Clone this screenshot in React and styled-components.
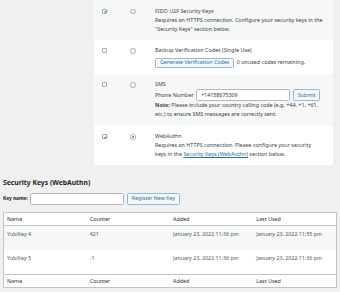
import React from "react";
import styled, { createGlobalStyle } from "styled-components";

const GlobalStyle = createGlobalStyle`
  html, body {
    margin: 0;
    padding: 0;
  }
  body {
    background: #f0f0f1;
    color: #3c434a;
    font-family: "Noto Sans", "Open Sans", sans-serif;
    font-size: 5.4px;
    line-height: 9px;
  }
`;

const Page = styled.div`
  width: 340px;
  height: 292px;
  box-sizing: border-box;
  padding: 0 3px;
  overflow: hidden;
`;

const ProviderList = styled.div`
  margin-left: 91px;
  width: 239px;
  background: #fff;
`;

const ProviderRow = styled.div`
  display: grid;
  grid-template-columns: 28px 25px 1fr;
  padding: 6.5px 6px 6.2px 8px;
  background: ${({ $striped }) => ($striped ? "#f6f7f7" : "#fff")};
`;

const Cell = styled.div`
  display: flex;
  align-items: flex-start;
  padding-top: 2px;
`;

const Check = styled.span`
  box-sizing: border-box;
  width: 5px;
  height: 5px;
  border: 1px solid #a7aaad;
  border-radius: 1px;
  background: #fff;
  position: relative;
  svg {
    position: absolute;
    left: -1px;
    top: -1.5px;
  }
`;

const Radio = styled.span`
  box-sizing: border-box;
  width: 5.5px;
  height: 5.5px;
  border: 1px solid #a7aaad;
  border-radius: 50%;
  background: #fff;
  display: flex;
  align-items: center;
  justify-content: center;
  &::after {
    content: "";
    display: ${({ $checked }) => ($checked ? "block" : "none")};
    width: 2px;
    height: 2px;
    border-radius: 50%;
    background: #3582c4;
  }
`;

const Body = styled.div`
  color: #3c434a;
  white-space: nowrap;
`;

const Title = styled.div``;

const Text = styled.div``;

const Link = styled.a`
  color: #2271b1;
  text-decoration: underline;
`;

const Inline = styled.div`
  display: flex;
  align-items: center;
  gap: 2.5px;
  margin-top: ${({ $top }) => $top || "0"};
`;

const Button = styled.button`
  box-sizing: border-box;
  height: ${({ $h }) => $h || "10px"};
  padding: 0 4px;
  border: 1px solid #8fbbe0;
  border-radius: 1.5px;
  background: #f6f7f7;
  color: #2271b1;
  font-family: inherit;
  font-size: 5.3px;
  line-height: 1;
  cursor: pointer;
`;

const Input = styled.input`
  box-sizing: border-box;
  width: ${({ $w }) => $w};
  height: 12px;
  padding: 0 4px;
  border: 1px solid #b4b6b9;
  border-radius: 1.5px;
  background: #fff;
  color: #2c3338;
  font-family: inherit;
  font-size: 5.3px;
  outline: none;
`;

const Heading = styled.h2`
  margin: 12.5px 0 0;
  font-size: 6.8px;
  line-height: 9px;
  font-weight: 700;
  color: #1d2327;
`;

const KeyForm = styled.div`
  display: flex;
  align-items: center;
  gap: 2.5px;
  margin-top: 6px;
`;

const Label = styled.label`
  font-weight: 700;
  font-size: 4.8px;
  color: #1d2327;
`;

const KeysTable = styled.table`
  width: 100%;
  margin-top: 7.5px;
  border-collapse: collapse;
  table-layout: fixed;
  background: #fff;
  border: 1px solid #c3c4c7;
`;

const HeadCell = styled.th`
  text-align: left;
  font-weight: 400;
  color: #2c3338;
  padding: 1.5px 3px 1.5px;
  line-height: 9px;
  border-top: ${({ $foot }) => ($foot ? "1px solid #c3c4c7" : "none")};
  border-bottom: ${({ $foot }) => ($foot ? "none" : "1px solid #c3c4c7")};
`;

const Row = styled.tr`
  background: ${({ $striped }) => ($striped ? "#f6f7f7" : "#fff")};
`;

const DataCell = styled.td`
  padding: 3.5px 3px 11.5px;
  line-height: 9px;
  color: #50575e;
  vertical-align: top;
  white-space: nowrap;
  font-size: 5.3px;
`;

const CheckMark = () => (
  <svg width="7" height="7" viewBox="0 0 20 20">
    <path
      d="M14.83 4.89l1.34.94-5.81 8.38H9.02L5.78 9.67l1.34-1.25 2.57 2.4z"
      fill="#3582c4"
    />
  </svg>
);

const Box = ({ checked }) => <Check>{checked && <CheckMark />}</Check>;

const providers = [
  {
    id: "u2f",
    enabled: true,
    primary: false,
    title: "FIDO U2F Security Keys",
    body: (
      <Text>
        Requires an HTTPS connection. Configure your security keys in the
        <br />
        "Security Keys" section below.
      </Text>
    ),
  },
  {
    id: "backup",
    enabled: false,
    primary: false,
    title: "Backup Verification Codes (Single Use)",
    body: (
      <Inline $top="2.5px">
        <Button>Generate Verification Codes</Button>
        <span>0 unused codes remaining.</span>
      </Inline>
    ),
  },
  {
    id: "sms",
    enabled: false,
    primary: false,
    title: "SMS",
    body: (
      <>
        <Inline>
          <span>Phone Number</span>
          <Input $w="94px" defaultValue="+14158675309" />
          <Button $h="12px">Submit</Button>
        </Inline>
        <Text>
          <strong>Note:</strong> Please include your country calling code (e.g. +44, +1, +61,
          <br />
          etc.) to ensure SMS messages are correctly sent.
        </Text>
      </>
    ),
  },
  {
    id: "webauthn",
    enabled: true,
    primary: true,
    title: "WebAuthn",
    body: (
      <Text>
        Requires an HTTPS connection. Please configure your security
        <br />
        keys in the <Link href="#">Security Keys (WebAuthn)</Link> section below.
      </Text>
    ),
  },
];

const keys = [
  { name: "YubiKey 4", counter: "421", added: "January 23, 2022 11:36 pm", used: "January 23, 2022 11:55 pm" },
  { name: "YubiKey 5", counter: "-1", added: "January 23, 2022 11:36 pm", used: "January 23, 2022 11:36 pm" },
];

const columns = ["Name", "Counter", "Added", "Last Used"];

export default function App() {
  return (
    <>
      <GlobalStyle />
      <Page>
        <ProviderList>
          {providers.map((p, i) => (
            <ProviderRow key={p.id} $striped={i % 2 === 0}>
              <Cell>
                <Box checked={p.enabled} />
              </Cell>
              <Cell>
                <Radio $checked={p.primary} />
              </Cell>
              <Body>
                <Title>{p.title}</Title>
                {p.body}
              </Body>
            </ProviderRow>
          ))}
        </ProviderList>

        <Heading>Security Keys (WebAuthn)</Heading>
        <KeyForm>
          <Label htmlFor="key-name">Key name:</Label>
          <Input id="key-name" $w="94px" />
          <Button $h="12px">Register New Key</Button>
        </KeyForm>

        <KeysTable>
          <thead>
            <tr>
              {columns.map((c) => (
                <HeadCell key={c}>{c}</HeadCell>
              ))}
            </tr>
          </thead>
          <tbody>
            {keys.map((k, i) => (
              <Row key={k.name} $striped={i % 2 === 0}>
                <DataCell>{k.name}</DataCell>
                <DataCell>{k.counter}</DataCell>
                <DataCell>{k.added}</DataCell>
                <DataCell>{k.used}</DataCell>
              </Row>
            ))}
          </tbody>
          <tfoot>
            <tr>
              {columns.map((c) => (
                <HeadCell key={c} $foot>
                  {c}
                </HeadCell>
              ))}
            </tr>
          </tfoot>
        </KeysTable>
      </Page>
    </>
  );
}
